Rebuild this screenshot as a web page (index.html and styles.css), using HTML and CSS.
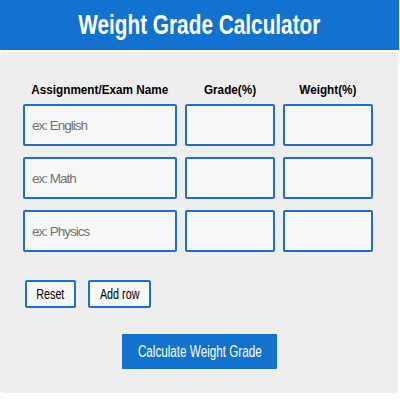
FILE: index.html
```html
<!DOCTYPE html>
<html lang="en">
<head>
<meta charset="utf-8">
<title>Weight Grade Calculator</title>
<link rel="stylesheet" href="styles.css">
</head>
<body>
<header class="topbar">
  <h1 class="title"><span class="squeeze">Weight Grade Calculator</span></h1>
</header>
<main class="card">
  <div class="table">
    <div class="labels">
      <div class="label"><span class="squeeze-label">Assignment/Exam Name</span></div>
      <div class="label"><span class="squeeze-label">Grade(%)</span></div>
      <div class="label"><span class="squeeze-label">Weight(%)</span></div>
    </div>
    <div class="rows">
      <input class="field" type="text" placeholder="ex: English">
      <input class="field" type="text">
      <input class="field" type="text">
      <input class="field" type="text" placeholder="ex: Math">
      <input class="field" type="text">
      <input class="field" type="text">
      <input class="field" type="text" placeholder="ex: Physics">
      <input class="field" type="text">
      <input class="field" type="text">
    </div>
    <div class="actions">
      <button class="btn reset" type="button"><span class="squeeze">Reset</span></button>
      <button class="btn add" type="button"><span class="squeeze">Add row</span></button>
    </div>
  </div>
  <div class="submit-wrap">
    <button class="btn-primary" type="button"><span class="squeeze-primary">Calculate Weight Grade</span></button>
  </div>
</main>
</body>
</html>
```
FILE: styles.css
```css
* { box-sizing: border-box; }
body {
  margin: 0;
  background: #ffffff;
  font-family: "Liberation Sans", Arial, sans-serif;
  width: 400px;
}
.squeeze, .squeeze-label, .squeeze-primary {
  display: inline-block;
  white-space: nowrap;
  transform-origin: center;
}
.squeeze { transform: scaleX(0.77); }
.squeeze-label { transform: scaleX(0.87); }
.squeeze-primary { transform: scaleX(0.73); }
.topbar {
  width: 399px;
  height: 50px;
  background: #1272d0;
  display: flex;
  align-items: center;
  justify-content: center;
}
.title {
  margin: 0;
  color: #ffffff;
  font-size: 27px;
  font-weight: bold;
  line-height: 1;
  display: flex;
  justify-content: center;
  white-space: nowrap;
}
.card {
  margin-top: 2px;
  width: 398px;
  height: 341px;
  background: #eeeeee;
  border-radius: 4px;
  padding-top: 29px;
}
.table {
  width: 350px;
  margin-left: 23px;
}
.labels, .rows {
  display: grid;
  grid-template-columns: 154px 90px 90px;
  column-gap: 8px;
}
.labels { margin-bottom: 5px; }
.label {
  display: flex;
  justify-content: center;
  white-space: nowrap;
  font-weight: bold;
  font-size: 13.5px;
  line-height: 18px;
  height: 18px;
  color: #000;
}
.rows { row-gap: 11px; }
.field {
  height: 42px;
  width: 100%;
  border: 2px solid #1a6fd0;
  border-radius: 2px;
  background: #f7f7f7;
  padding: 0 7px;
  font-family: inherit;
  font-size: 13.5px;
  letter-spacing: -1px;
  color: #000;
}
.field::placeholder { color: #737373; }
.actions {
  display: flex;
  gap: 12px;
  margin-top: 28px;
  padding-left: 2px;
}
.btn {
  height: 28px;
  border: 2px solid #1a6fd0;
  border-radius: 2px;
  background: #f7f7f7;
  font-family: inherit;
  font-size: 14px;
  color: #000;
  padding: 0;
  display: flex;
  align-items: center;
  justify-content: center;
  white-space: nowrap;
}
.reset { width: 51px; }
.add { width: 63px; }
.submit-wrap {
  display: flex;
  justify-content: center;
  margin-top: 26px;
  padding-left: 1px;
}
.btn-primary {
  width: 155px;
  height: 35px;
  background: #1272d0;
  color: #ffffff;
  border: none;
  border-radius: 1px;
  font-family: inherit;
  font-size: 16px;
  padding: 0;
  display: flex;
  align-items: center;
  justify-content: center;
  white-space: nowrap;
}
```
